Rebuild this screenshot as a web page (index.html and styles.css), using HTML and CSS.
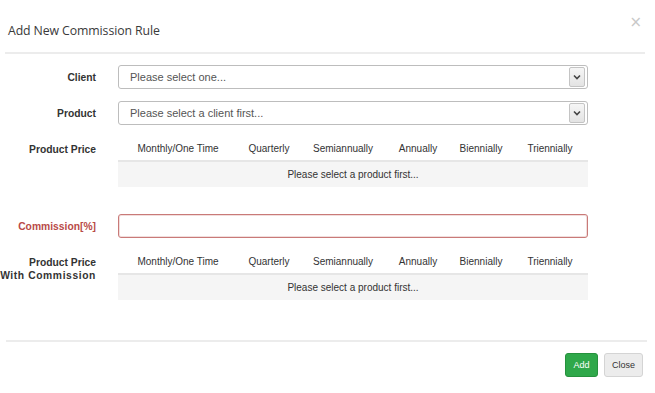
FILE: index.html
```html
<!DOCTYPE html>
<html>
<head>
<meta charset="utf-8">
<link rel="stylesheet" href="styles.css">
</head>
<body>
<div class="modal">
  <div class="modal-header">
    <h4 class="title">Add New Commission Rule</h4>
    <span class="close-x">&#215;</span>
  </div>
  <div class="modal-body">
    <div class="row">
      <label class="lbl">Client</label>
      <div class="select">
        <span class="sel-text">Please select one...</span>
        <span class="sel-arrow"><svg width="8" height="6" viewBox="0 0 8 6"><path d="M1 1.5 L4 4.5 L7 1.5" fill="none" stroke="#444" stroke-width="1.6"/></svg></span>
      </div>
    </div>
    <div class="row">
      <label class="lbl">Product</label>
      <div class="select">
        <span class="sel-text">Please select a client first...</span>
        <span class="sel-arrow"><svg width="8" height="6" viewBox="0 0 8 6"><path d="M1 1.5 L4 4.5 L7 1.5" fill="none" stroke="#444" stroke-width="1.6"/></svg></span>
      </div>
    </div>
    <div class="row top">
      <label class="lbl lbl-top">Product Price</label>
      <div class="ptable">
        <div class="phead">
          <span>Monthly/One Time</span><span>Quarterly</span><span>Semiannually</span><span>Annually</span><span>Biennially</span><span>Triennially</span>
        </div>
        <div class="pbody">Please select a product first...</div>
      </div>
    </div>
    <div class="row commission">
      <label class="lbl lbl-err">Commission[%]</label>
      <div class="input-err"></div>
    </div>
    <div class="row top">
      <label class="lbl lbl-top">Product Price<br><span class="wide">With Commission</span></label>
      <div class="ptable">
        <div class="phead">
          <span>Monthly/One Time</span><span>Quarterly</span><span>Semiannually</span><span>Annually</span><span>Biennially</span><span>Triennially</span>
        </div>
        <div class="pbody">Please select a product first...</div>
      </div>
    </div>
  </div>
  <div class="modal-footer">
    <button class="btn btn-add">Add</button>
    <button class="btn btn-close">Close</button>
  </div>
</div>
</body>
</html>
```
FILE: styles.css
```css
* { box-sizing: border-box; }
html, body { margin: 0; padding: 0; background: #fff; }
body { font-family: "Liberation Sans", Arial, sans-serif; color: #333; }
.modal { width: 655px; height: 393px; }
.modal-header {
  margin: 0 10px 0 5px;
  height: 54px;
  border-bottom: 2px solid #ececec;
  display: flex;
  align-items: flex-start;
  justify-content: space-between;
}
.title {
  margin: 22px 0 0 3px;
  font-family: "Open Sans", "Noto Sans", sans-serif;
  font-weight: 400;
  font-size: 12.3px;
  line-height: 17px;
  color: #3a3a3a;
  letter-spacing: -0.1px;
}
.close-x {
  margin: 13px 3px 0 0;
  font-family: "DejaVu Sans", sans-serif;
  font-size: 15px;
  color: #c8c8c8;
  line-height: 18px;
}
.modal-body { padding-top: 11px; height: 286px; }
.row {
  display: grid;
  grid-template-columns: 96px 470px;
  column-gap: 22px;
  align-items: center;
  margin-bottom: 12px;
}
.row.top { align-items: start; margin-bottom: 27px; margin-top: -1px; }
.row.commission { margin-bottom: 12px; }
.lbl {
  text-align: right;
  font-weight: 700;
  font-size: 10.3px;
  line-height: 13px;
  color: #333;
}
.wide { letter-spacing: 0.6px; }
.lbl-top { padding-top: 7px; }
.lbl-err { color: #b94a48; }
.select {
  height: 24px;
  border: 1px solid #bdbdbd;
  border-radius: 3px;
  display: flex;
  align-items: center;
  justify-content: space-between;
  padding-left: 11px;
  padding-right: 2px;
}
.sel-text { font-size: 11px; color: #555; }
.sel-arrow {
  width: 16px;
  height: 20px;
  border: 1px solid #c4c4c4;
  border-radius: 2px;
  background: linear-gradient(#f6f6f6, #e3e3e3);
  display: flex;
  align-items: center;
  justify-content: center;
}
.ptable { width: 470px; }
.phead {
  display: grid;
  grid-template-columns: 120px 62px 86px 64px 62px 76px;
  height: 26px;
  align-items: center;
  font-size: 10px;
  color: #333;
  border-bottom: 2px solid #e6e6e6;
}
.phead span { text-align: center; white-space: nowrap; }
.pbody {
  height: 25px;
  background: #f5f5f5;
  text-align: center;
  font-size: 10px;
  line-height: 25px;
  color: #333;
}
.input-err {
  height: 24px;
  border: 1px solid #c97a78;
  border-radius: 3px;
  box-shadow: inset 0 0 0 1px rgba(201,122,120,0.25);
}
.modal-footer {
  margin: 0 8px 0 6px;
  border-top: 2px solid #ececec;
  padding-top: 11px;
  padding-right: 4px;
  display: flex;
  justify-content: flex-end;
  gap: 6px;
}
.btn {
  height: 24px;
  border-radius: 3px;
  font-family: "Liberation Sans", Arial, sans-serif;
  font-size: 9px;
  padding: 0;
  cursor: pointer;
}
.btn-add {
  width: 33px;
  background: #2fa84a;
  border: 1px solid #26913d;
  color: #fff;
}
.btn-close {
  width: 39px;
  background: #ececec;
  border: 1px solid #d4d4d4;
  color: #333;
}
```
